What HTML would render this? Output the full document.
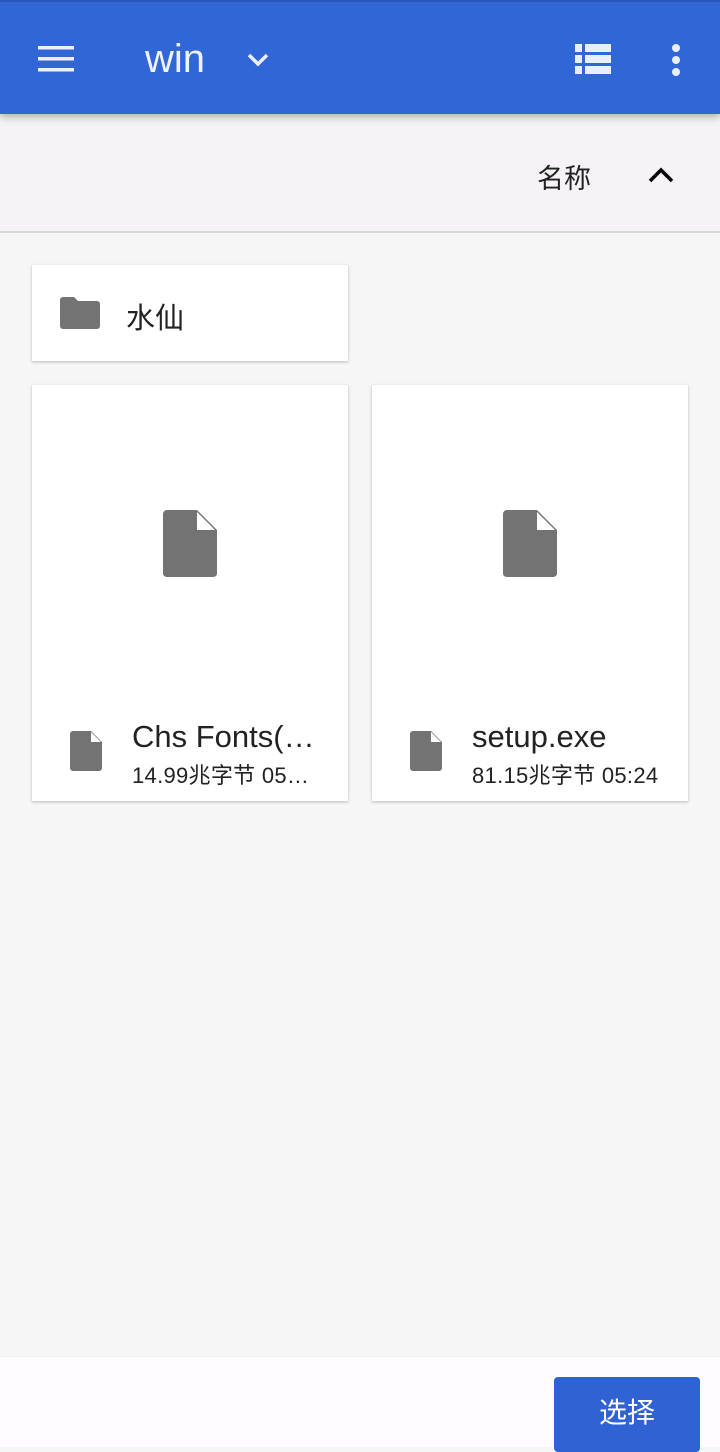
<!DOCTYPE html>
<html><head><meta charset="utf-8"><style>
*{margin:0;padding:0;box-sizing:border-box}
body{width:720px;height:1447px;background:#f6f6f6;font-family:"Liberation Sans","Noto Sans CJK SC",sans-serif;position:relative;overflow:hidden}
.top{position:absolute;left:0;top:0;width:720px;height:114px;background:#3066d6;border-top:2px solid #2756bd;box-shadow:0 3px 8px rgba(0,0,0,.3);z-index:2}
.sort{position:absolute;left:0;top:120px;width:720px;height:113px;background:#f6f3f6;border-bottom:2px solid #d8d8d8}
.card{position:absolute;background:#fff;box-shadow:0 1px 3px rgba(0,0,0,.25)}
.t{position:absolute;white-space:nowrap}
.bottom{position:absolute;left:0;top:1356px;width:720px;height:91px;background:#fefcfe;border-top:1px solid #eee}
.btn{position:absolute;left:554px;top:1377px;width:146px;height:75px;background:#2f62d3;border-radius:4px;color:#fff;font-size:28px;text-align:center;line-height:72px}
</style></head><body>
<div class="top">
<svg style="position:absolute;left:38px;top:44px" width="36" height="26"><rect y="0" width="36" height="3.5" fill="#eef"/><rect y="11" width="36" height="3.5" fill="#eef"/><rect y="22" width="36" height="3.5" fill="#eef"/></svg>
<div class="t" style="left:145px;top:35px;font-size:40px;color:#eef2ff">win</div>
<svg style="position:absolute;left:246px;top:50px" width="24" height="16"><path d="M3 3 L12 12 L21 3" stroke="#eef" stroke-width="3.5" fill="none"/></svg>
<svg style="position:absolute;left:575px;top:42px" width="36" height="30" fill="#e8eefc"><rect x="0" y="0" width="7" height="8"/><rect x="10" y="0" width="26" height="8"/><rect x="0" y="11" width="7" height="8"/><rect x="10" y="11" width="26" height="8"/><rect x="0" y="22" width="7" height="8"/><rect x="10" y="22" width="26" height="8"/></svg>
<svg style="position:absolute;left:670px;top:41px" width="12" height="34" fill="#e8eefc"><circle cx="6" cy="5" r="4"/><circle cx="6" cy="17" r="4"/><circle cx="6" cy="29" r="4"/></svg>
</div>
<div class="sort">
<div class="t" style="left:537px;top:37px;font-size:27px;color:#222">名称</div>
<svg style="position:absolute;left:647px;top:45px" width="28" height="20"><path d="M3 16 L14 5 L25 16" stroke="#000" stroke-width="3.5" fill="none"/></svg>
</div>
<div class="card" style="left:32px;top:265px;width:316px;height:96px">
<svg style="position:absolute;left:28px;top:32px" width="40" height="32"><path d="M3 0 H14 L18 4 H37 A3 3 0 0 1 40 7 V29 A3 3 0 0 1 37 32 H3 A3 3 0 0 1 0 29 V3 A3 3 0 0 1 3 0Z" fill="#737373"/></svg>
<div class="t" style="left:94px;top:30px;font-size:29px;color:#222">水仙</div>
</div>
<div class="card" style="left:32px;top:385px;width:316px;height:416px">
<svg style="position:absolute;left:131px;top:125px" width="54" height="67"><path d="M4 0 H34 L54 20 V62 A4 4 0 0 1 50 67 H4 A4 4 0 0 1 0 62 V4 A4 4 0 0 1 4 0Z" fill="#737373"/><path d="M34 2 V20 H52Z" fill="#fff"/></svg>
<svg style="position:absolute;left:38px;top:346px" width="32" height="40"><path d="M3 0 H21 L32 11 V37 A3 3 0 0 1 29 40 H3 A3 3 0 0 1 0 37 V3 A3 3 0 0 1 3 0Z" fill="#737373"/><path d="M21 1 V11 H31Z" fill="#fff"/></svg>
<div class="t" style="left:100px;top:334px;font-size:31px;color:#222">Chs Fonts(…</div>
<div class="t" style="left:100px;top:373px;font-size:22px;color:#222;letter-spacing:0.3px">14.99兆字节 05…</div>
</div>
<div class="card" style="left:372px;top:385px;width:316px;height:416px">
<svg style="position:absolute;left:131px;top:125px" width="54" height="67"><path d="M4 0 H34 L54 20 V62 A4 4 0 0 1 50 67 H4 A4 4 0 0 1 0 62 V4 A4 4 0 0 1 4 0Z" fill="#737373"/><path d="M34 2 V20 H52Z" fill="#fff"/></svg>
<svg style="position:absolute;left:38px;top:346px" width="32" height="40"><path d="M3 0 H21 L32 11 V37 A3 3 0 0 1 29 40 H3 A3 3 0 0 1 0 37 V3 A3 3 0 0 1 3 0Z" fill="#737373"/><path d="M21 1 V11 H31Z" fill="#fff"/></svg>
<div class="t" style="left:100px;top:334px;font-size:31px;color:#222">setup.exe</div>
<div class="t" style="left:100px;top:373px;font-size:22px;color:#222;letter-spacing:0.3px">81.15兆字节 05:24</div>
</div>
<div class="bottom"></div>
<div class="btn">选择</div>
</body></html>
